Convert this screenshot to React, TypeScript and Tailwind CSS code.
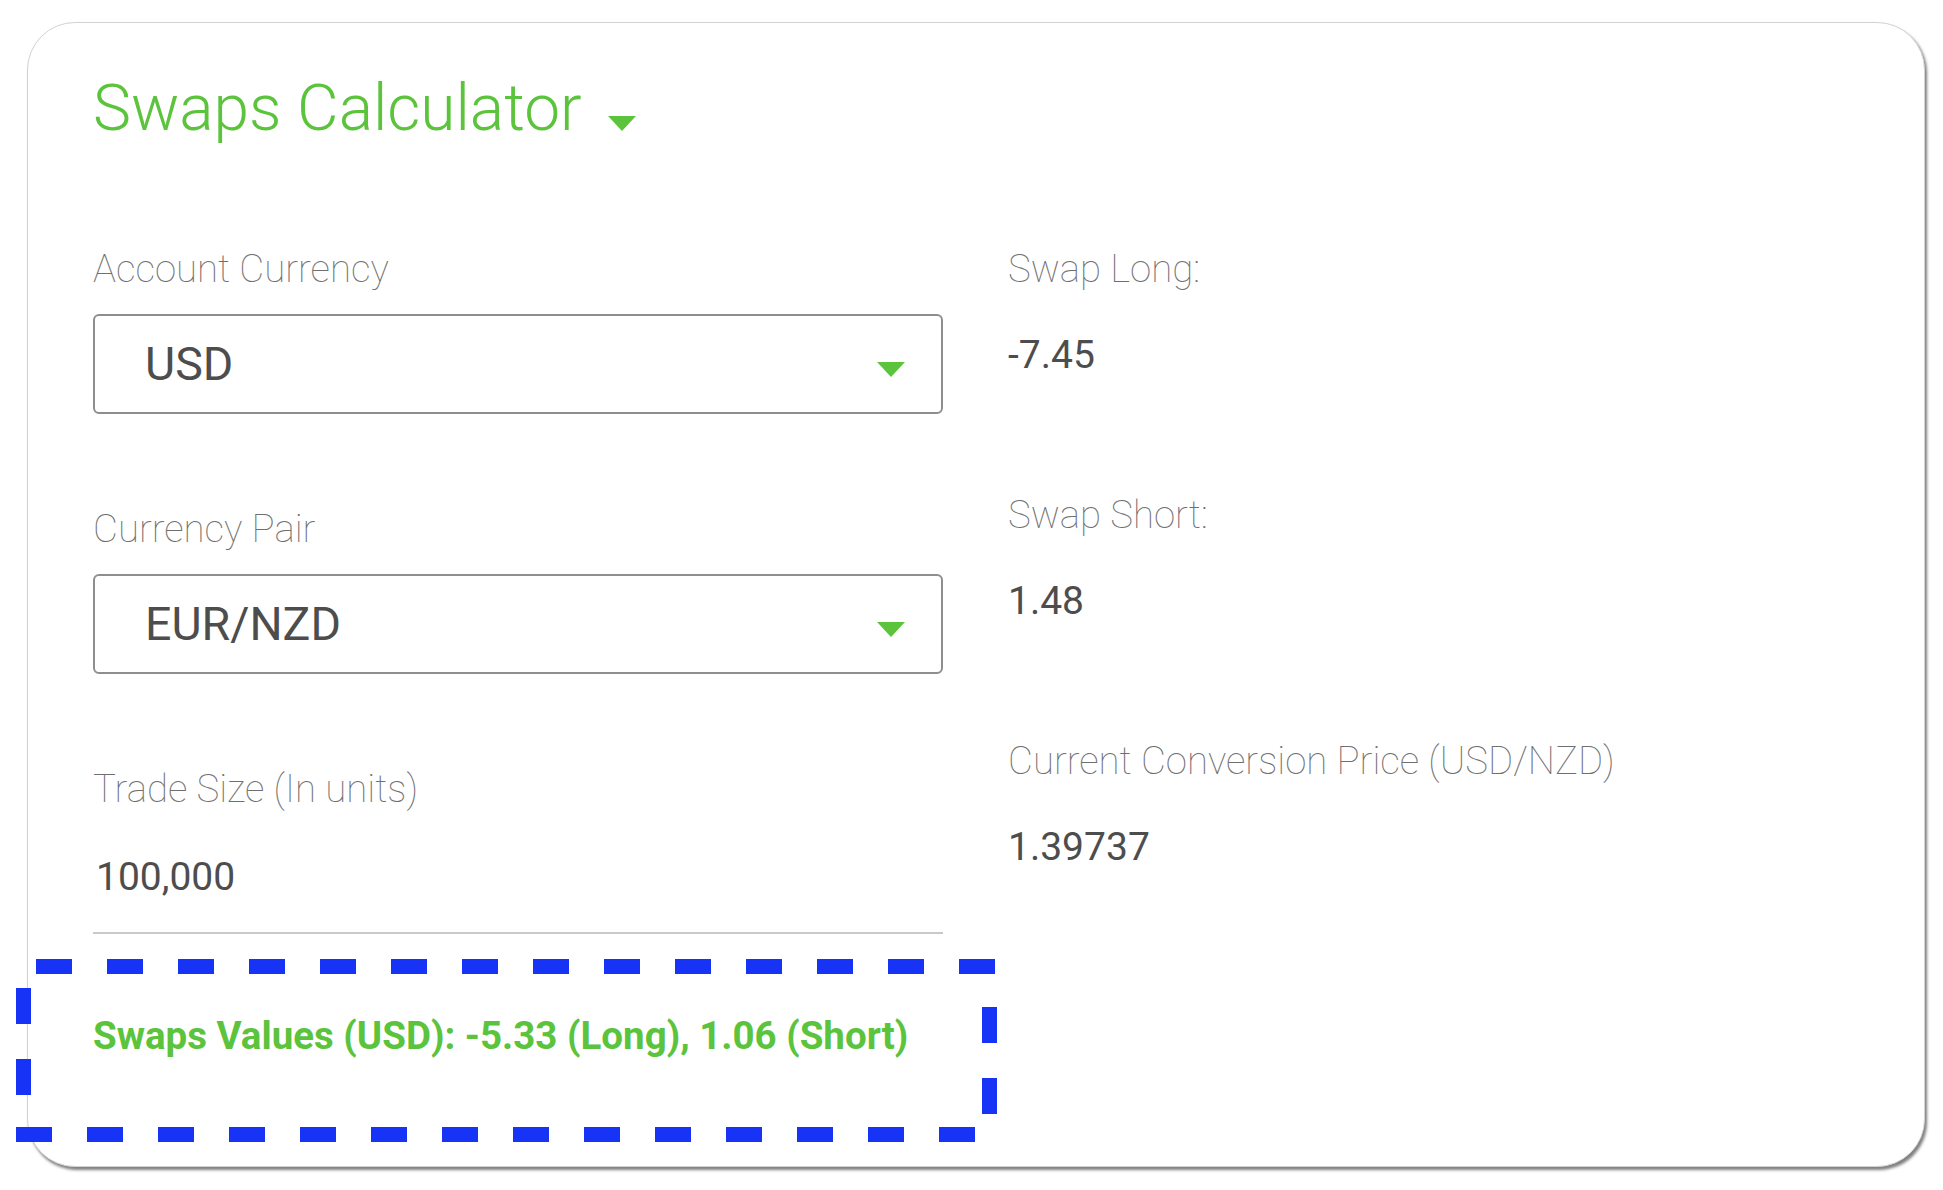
import React from "react";

const GREEN = "#5bc33c";

type Pair = { label: string; value: string };

const rightPairs: Pair[] = [
  { label: "Swap Long:", value: "-7.45" },
  { label: "Swap Short:", value: "1.48" },
  { label: "Current Conversion Price (USD/NZD)", value: "1.39737" },
];

function Caret({ className = "" }: { className?: string }) {
  return (
    <svg width="28" height="15" viewBox="0 0 28 15" className={className}>
      <polygon points="0,0 28,0 14,15" fill={GREEN} />
    </svg>
  );
}

function Label({ children, className = "" }: { children: React.ReactNode; className?: string }) {
  return <div className={"text-[38.4px] leading-[44px] font-thin text-[#6f6f6f] " + className}>{children}</div>;
}

function SelectBox({ value }: { value: string }) {
  return (
    <div className="mt-[23px] h-[100px] border-2 border-[#8e8e8e] rounded-[6px] flex items-start pl-[50px] pr-[36px]">
      <span className="mt-[25px] text-[46.5px] leading-[46px] text-[#4d4d4d]">{value}</span>
      <Caret className="ml-auto mt-[46px]" />
    </div>
  );
}

// blue dashed annotation drawn on top of the card
function Highlight() {
  return (
    <svg className="absolute inset-0 pointer-events-none" width="1943" height="1190">
      <g stroke="#1733f5" strokeWidth="15" strokeDasharray="36 35" fill="none">
        <line x1="36" y1="966.5" x2="998" y2="966.5" />
        <line x1="16" y1="1134.5" x2="980" y2="1134.5" />
        <line x1="23.5" y1="988" x2="23.5" y2="1100" />
        <line x1="989.5" y1="1007" x2="989.5" y2="1116" />
      </g>
    </svg>
  );
}

export default function App() {
  return (
    <div
      className="relative w-[1943px] h-[1190px] bg-white pl-[27px] pt-[22px]"
      style={{ fontFamily: "Roboto, 'Liberation Sans', sans-serif" }}
    >
      <div className="w-[1898px] h-[1145px] bg-white rounded-[48px] border border-[#d2d2d2] shadow-[2px_3px_3px_rgba(0,0,0,0.5)] pt-[54px] pl-[65px]">
        {/* title */}
        <div className="flex items-start">
          <h1 className="text-[64px] leading-[64px] font-light text-[#5bc33c]">Swaps Calculator</h1>
          <Caret className="ml-[26px] mt-[39px]" />
        </div>

        <div className="mt-[106px] grid grid-cols-[850px_1fr] gap-x-[65px]">
          {/* left column */}
          <div>
            <Label>Account Currency</Label>
            <SelectBox value="USD" />

            <Label className="mt-[93px]">Currency Pair</Label>
            <SelectBox value="EUR/NZD" />

            <Label className="mt-[93px]">Trade Size (In units)</Label>
            <div className="mt-[47px] pb-[36px] border-b-2 border-[#c9c9c9]">
              <div className="pl-[3px] text-[39px] leading-[38px] text-[#4d4d4d]">100,000</div>
            </div>
          </div>

          {/* right column */}
          <div>
            {rightPairs.map((p, i) => (
              <div key={p.label} className={i > 0 ? "mt-[118px]" : ""}>
                <Label>{p.label}</Label>
                <div className="mt-[45px] text-[39px] leading-[39px] text-[#4d4d4d]">{p.value}</div>
              </div>
            ))}
          </div>
        </div>

        <div className="mt-[80px] text-[38.5px] leading-[44px] font-bold text-[#5bc33c]">
          Swaps Values (USD): -5.33 (Long), 1.06 (Short)
        </div>
      </div>
      <Highlight />
    </div>
  );
}
